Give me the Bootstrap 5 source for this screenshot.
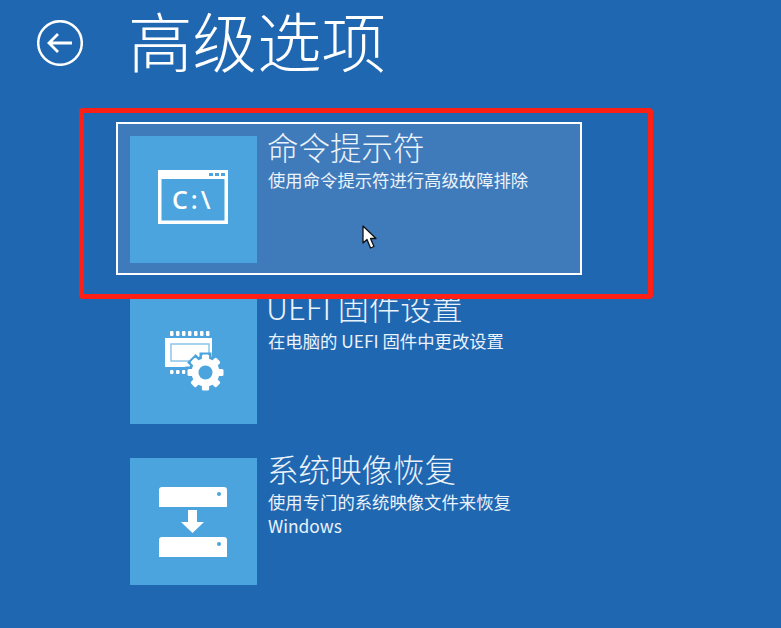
<!DOCTYPE html>
<html lang="zh-CN">
<head>
  <meta charset="UTF-8">
  <meta name="viewport" content="width=device-width, initial-scale=1.0">
  <title>高级选项</title>
  <link href="https://cdn.jsdelivr.net/npm/bootstrap@5.3.2/dist/css/bootstrap.min.css" rel="stylesheet">
  <style>
    body {
      background-color: #2067b1;
      color: #fff;
      font-family: "Noto Sans CJK SC", "Noto Sans", sans-serif;
      overflow: hidden;
      height: 628px;
    }

    .page-head {
      height: 86px;
      padding-left: 37px;
    }

    .back-btn {
      width: 46px;
      height: 46px;
      margin-right: 45px;
    }

    .page-title {
      font-family: "Liberation Sans", "Noto Sans CJK SC", sans-serif;
      font-size: 64.5px;
      font-weight: 300;
      line-height: 86px;
      margin: 4px 0 0;
    }

    .option-list {
      padding-left: 116px;
      padding-top: 36px;
    }

    .option-row {
      width: 466px;
      height: 153px;
      padding: 14px;
      border: 2px solid transparent;
      margin-bottom: 8px;
    }

    .option-row.selected {
      background-color: #3f7abb;
      border-color: #fff;
    }

    .tile {
      width: 127px;
      height: 127px;
      background-color: #4ba4dd;
      flex: none;
      margin-top: -2px;
      margin-left: -2px;
    }

    .option-text {
      margin-left: 11px;
      margin-top: -12px;
    }

    .option-name {
      font-size: 31.5px;
      font-weight: 300;
      line-height: 40px;
      margin: 0 0 0 -1px;
      color: #eaf2fa;
    }

    .uefi-name {
      font-size: 31.2px;
      margin-left: -2px;
    }

    .option-desc {
      font-size: 17.35px;
      line-height: 24px;
      margin: 2px 0 0;
      color: #eaf2fa;
    }

    /* annotation drawn on top of the screenshot */
    .red-mark {
      position: absolute;
      left: 79px;
      top: 108px;
      width: 574px;
      height: 191px;
      border: 5px solid #ff2015;
      border-radius: 4px;
    }

    .pointer {
      position: absolute;
      left: 360px;
      top: 224px;
    }

    .cmd-text {
      font-family: "Open Sans", sans-serif;
      font-size: 25px;
      font-weight: 600;
      letter-spacing: 3px;
      fill: #fff;
    }
  </style>
</head>
<body>
  <div class="page-head d-flex align-items-center">
    <svg class="back-btn" viewBox="0 0 46 46" fill="none" stroke="#fff">
      <circle cx="23" cy="23" r="21.8" stroke-width="2.5"/>
      <path d="M12 23H35M21 14L12 23 21 32" stroke-width="2.8"/>
    </svg>
    <h1 class="page-title">高级选项</h1>
  </div>

  <div class="option-list">
    <div class="option-row selected d-flex">
      <div class="tile">
        <svg width="127" height="127" viewBox="0 0 127 127">
          <path fill="#fff" fill-rule="evenodd" d="M28 34H98V88H28ZM31.5 43V84.5H94.5V43Z"/>
          <g fill="#4ba4dd">
            <rect x="79" y="37" width="4" height="3"/>
            <rect x="85" y="37" width="4" height="3"/>
            <rect x="91" y="37" width="4" height="3"/>
          </g>
          <text class="cmd-text" x="42" y="73">C:\</text>
        </svg>
      </div>
      <div class="option-text">
        <h2 class="option-name">命令提示符</h2>
        <p class="option-desc">使用命令提示符进行高级故障排除</p>
      </div>
    </div>

    <div class="option-row d-flex">
      <div class="tile">
        <svg width="127" height="127" viewBox="0 0 127 127">
          <rect x="35" y="41" width="47" height="29" fill="#fff"/>
          <rect x="41" y="47" width="38" height="17" fill="none" stroke="#8cc5ea" stroke-width="1.5"/>
          <g fill="#fff">
            <rect x="40" y="34" width="3.5" height="5" rx="1"/>
            <rect x="46" y="34" width="3.5" height="5" rx="1"/>
            <rect x="52" y="34" width="3.5" height="5" rx="1"/>
            <rect x="58" y="34" width="3.5" height="5" rx="1"/>
            <rect x="64" y="34" width="3.5" height="5" rx="1"/>
            <rect x="70" y="34" width="3.5" height="5" rx="1"/>
            <rect x="76" y="34" width="3.5" height="5" rx="1"/>
            <rect x="40" y="73" width="3.5" height="4" rx="1"/>
            <rect x="46" y="73" width="3.5" height="4" rx="1"/>
            <rect x="52" y="73" width="3.5" height="4" rx="1"/>
          </g>
          <!-- gear: blue halo first so it bites into the chip -->
          <g transform="translate(75.5 75.5)">
            <circle r="17" fill="#4ba4dd"/>
            <g fill="#4ba4dd">
              <rect x="-6" y="-20" width="12" height="40"/>
              <rect x="-6" y="-20" width="12" height="40" transform="rotate(45)"/>
              <rect x="-6" y="-20" width="12" height="40" transform="rotate(90)"/>
              <rect x="-6" y="-20" width="12" height="40" transform="rotate(135)"/>
            </g>
            <g fill="#fff">
              <rect x="-3.6" y="-18" width="7.2" height="36" rx="1.5"/>
              <rect x="-3.6" y="-18" width="7.2" height="36" rx="1.5" transform="rotate(45)"/>
              <rect x="-3.6" y="-18" width="7.2" height="36" rx="1.5" transform="rotate(90)"/>
              <rect x="-3.6" y="-18" width="7.2" height="36" rx="1.5" transform="rotate(135)"/>
              <circle r="14"/>
            </g>
            <circle r="7" fill="#4ba4dd"/>
          </g>
        </svg>
      </div>
      <div class="option-text">
        <h2 class="option-name uefi-name">UEFI 固件设置</h2>
        <p class="option-desc">在电脑的 UEFI 固件中更改设置</p>
      </div>
    </div>

    <div class="option-row d-flex">
      <div class="tile">
        <svg width="127" height="127" viewBox="0 0 127 127">
          <path fill="#fff" d="M29 49V32a3 3 0 0 1 3-3H94a3 3 0 0 1 3 3V49Z"/>
          <path fill="#fff" d="M29 99V82a3 3 0 0 1 3-3H94a3 3 0 0 1 3 3V99Z"/>
          <circle cx="89" cy="36" r="2" fill="#4ba4dd"/>
          <circle cx="89" cy="86" r="2" fill="#4ba4dd"/>
          <path fill="#fff" d="M58 52H67V64H74L62.5 75 51 64H58Z"/>
        </svg>
      </div>
      <div class="option-text">
        <h2 class="option-name">系统映像恢复</h2>
        <p class="option-desc">使用专门的系统映像文件来恢复<br>Windows</p>
      </div>
    </div>
  </div>

  <div class="red-mark"></div>

  <svg class="pointer" width="20" height="28" viewBox="0 0 20 28">
    <path d="M3 2V19L7 15.5 10.5 24 14 22.5 10.5 14.5H16Z" fill="#fff" stroke="#111" stroke-width="1.3" stroke-linejoin="round"/>
  </svg>

  <script src="https://cdn.jsdelivr.net/npm/bootstrap@5.3.2/dist/js/bootstrap.bundle.min.js"></script>
</body>
</html>
